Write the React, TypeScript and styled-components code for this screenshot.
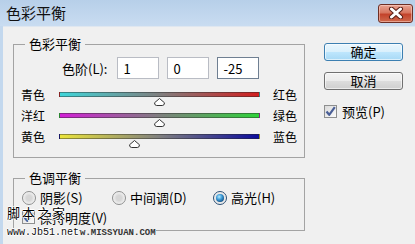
import React from 'react'
import styled, { createGlobalStyle } from 'styled-components'

const GlobalStyle = createGlobalStyle`
  html, body {
    margin: 0;
    padding: 0;
    background: #f0f0f0;
  }
  body {
    font-family: 'Noto Sans CJK SC', 'Liberation Sans', sans-serif;
    font-size: 13px;
    color: #000;
  }
`

type SliderData = {
  left: string
  right: string
  value: number
  from: string
  to: string
}

const sliders: SliderData[] = [
  { left: '青色', right: '红色', value: 1, from: '#3fd6da', to: '#d21e1e' },
  { left: '洋红', right: '绿色', value: 0, from: '#d21fd6', to: '#2fd23a' },
  { left: '黄色', right: '蓝色', value: -25, from: '#ebe43a', to: '#0c0c9c' },
]

const Window = styled.div`
  position: relative;
  width: 415px;
  height: 244px;
  overflow: hidden;
  display: flex;
  flex-direction: column;
  background: #c3d8ee;
`

const TitleBar = styled.div`
  height: 26px;
  flex: none;
  display: flex;
  align-items: center;
  justify-content: space-between;
  padding: 0 2px 0 6px;
  background: linear-gradient(#b7cfe9, #c9dcf1);
`

const Title = styled.span`
  font-size: 15px;
  line-height: 18px;
  color: #111;
`

const CloseButton = styled.div`
  width: 35px;
  height: 19px;
  box-sizing: border-box;
  border: 1px solid #6e2f25;
  border-radius: 3px;
  background: linear-gradient(#e9a493 0%, #d7765f 45%, #c3432b 55%, #cf6a4d 100%);
  box-shadow: inset 0 0 0 1px rgba(255, 220, 210, 0.5);
  display: flex;
  align-items: center;
  justify-content: center;
`

const Body = styled.div`
  flex: 1;
  margin-left: 3px;
  background: #f0f0f0;
  border-top: 1px solid #dfe7f0;
  display: flex;
  padding: 9px 0 0 10px;
`

const LeftColumn = styled.div`
  width: 292px;
  display: flex;
  flex-direction: column;
`

const RightColumn = styled.div`
  margin-left: 19px;
  padding-top: 7px;
  display: flex;
  flex-direction: column;
`

const Group = styled.fieldset<{ $gap?: number }>`
  margin: ${(p) => p.$gap ?? 0}px 0 0 0;
  padding: 0;
  border: 1px solid #a3a3a3;
  min-inline-size: 0;
`

const Legend = styled.legend`
  margin-left: 11px;
  padding: 0 4px;
  font-size: 13px;
  line-height: 16px;
`

const ColorContent = styled.div`
  padding: 5px 7px 18px 7px;
`

const LevelsRow = styled.div`
  display: flex;
  align-items: center;
  gap: 8px;
  height: 22px;
  padding-left: 41px;
`

const LevelsLabel = styled.span`
  font-size: 13px;
  margin-right: 2px;
`

const LevelInput = styled.input<{ $focused?: boolean }>`
  width: 42px;
  height: 22px;
  box-sizing: border-box;
  margin: 0;
  padding: 0 0 0 5px;
  border: 1px solid ${(p) => (p.$focused ? '#6f7f92' : '#b9bcc4')};
  background: #fff;
  font-family: 'Noto Sans CJK SC', 'Liberation Sans', sans-serif;
  font-size: 13px;
  color: #000;
  outline: none;
`

const Sliders = styled.div`
  margin-top: 13px;
  display: flex;
  flex-direction: column;
  gap: 16px;
`

const SliderRow = styled.div`
  display: flex;
  align-items: center;
  height: 5px;
`

const SideLabel = styled.span<{ $right?: boolean }>`
  width: ${(p) => (p.$right ? 'auto' : '38px')};
  margin-left: ${(p) => (p.$right ? '13px' : '0')};
  font-size: 12px;
  line-height: 16px;
  flex: none;
`

const Track = styled.div<{ $from: string; $to: string }>`
  position: relative;
  width: 201px;
  height: 5px;
  flex: none;
  box-sizing: border-box;
  border: 1px solid rgba(40, 40, 40, 0.45);
  background: linear-gradient(to right, ${(p) => p.$from}, #7f7f7f 50%, ${(p) => p.$to});
`

const Thumb = styled.svg`
  position: absolute;
  top: 5px;
  width: 11px;
  height: 8px;
  overflow: visible;
`

const ToneContent = styled.div`
  padding: 4px 0 5px 8px;
  display: flex;
  flex-direction: column;
  gap: 5px;
`

const RadioRow = styled.div`
  display: grid;
  grid-template-columns: 90px 101px auto;
  align-items: center;
  height: 15px;
`

const Option = styled.label`
  display: flex;
  align-items: center;
  gap: 4px;
  font-size: 13px;
  line-height: 15px;
  white-space: nowrap;
`

const Radio = styled.span<{ $checked?: boolean }>`
  position: relative;
  width: 14px;
  height: 14px;
  flex: none;
  box-sizing: border-box;
  border-radius: 50%;
  border: 1px solid ${(p) => (p.$checked ? '#2c4f74' : '#8e8f8f')};
  background: radial-gradient(circle at 50% 50%, #d6d6d6 30%, #f4f4f4 75%, #ffffff);
  &::after {
    content: '';
    display: ${(p) => (p.$checked ? 'block' : 'none')};
    position: absolute;
    left: 2px;
    top: 2px;
    width: 8px;
    height: 8px;
    border-radius: 50%;
    background: radial-gradient(circle at 40% 35%, #b5ecff 0%, #3c9ad6 40%, #0e4a80 80%);
  }
`

const CheckRow = styled.label`
  display: flex;
  align-items: center;
  gap: 4px;
  height: 15px;
  font-size: 13px;
  line-height: 15px;
`

const Box = styled.span`
  width: 13px;
  height: 13px;
  flex: none;
  box-sizing: border-box;
  border: 1px solid #8e8f8f;
  background: linear-gradient(135deg, #dadada, #fbfbfb);
  display: flex;
  align-items: center;
  justify-content: center;
`

const Button = styled.button<{ $primary?: boolean }>`
  width: 79px;
  height: 18px;
  box-sizing: border-box;
  padding: 0;
  margin: 0;
  border: 1px solid ${(p) => (p.$primary ? '#3c7fb1' : '#707070')};
  border-radius: 3px;
  background: ${(p) =>
    p.$primary
      ? 'linear-gradient(#eaf6fd 0%, #d9f0fc 50%, #bee6fd 51%, #a7d9f5 100%)'
      : 'linear-gradient(#f2f2f2 0%, #ebebeb 50%, #dddddd 51%, #cfcfcf 100%)'};
  box-shadow: inset 0 0 0 1px rgba(255, 255, 255, 0.6);
  font-family: 'Noto Sans CJK SC', sans-serif;
  font-size: 13px;
  line-height: 16px;
  color: #000;
  & + & {
    margin-top: 11px;
  }
`

const PreviewRow = styled(CheckRow)`
  margin-top: 14px;
  gap: 5px;
`

const WatermarkTitle = styled.div`
  position: absolute;
  left: 7px;
  top: 205px;
  font-size: 13px;
  line-height: 16px;
  letter-spacing: 2px;
  color: #000;
  text-shadow: 1px 0 0 #fff, -1px 0 0 #fff, 0 1px 0 #fff, 0 -1px 0 #fff;
`

const WatermarkUrl = styled.div`
  position: absolute;
  left: 7px;
  top: 228px;
  font-family: 'Liberation Mono', monospace;
  font-size: 10px;
  line-height: 10px;
  color: #111;
  background: #f0f0f0;
  text-shadow: 1px 0 0 #fff, -1px 0 0 #fff, 0 1px 0 #fff, 0 -1px 0 #fff;
`

const WatermarkSite = styled.div`
  position: absolute;
  left: 80px;
  top: 229px;
  font-family: 'Liberation Mono', monospace;
  font-weight: bold;
  font-size: 9px;
  line-height: 9px;
  color: #333;
  background: #f0f0f0;
`

const CheckMark = () => (
  <svg width="11" height="11" viewBox="0 0 11 11">
    <path d="M1.5 5.5 L4.2 8.8 L9.8 1.2" fill="none" stroke="#4a5f97" strokeWidth="2.2" strokeLinejoin="round" />
  </svg>
)

const CloseGlyph = () => (
  <svg width="16" height="12" viewBox="0 0 16 12">
    <path d="M3.5 2 L12.5 10 M12.5 2 L3.5 10" stroke="#5a1f16" strokeWidth="5" strokeLinecap="round" />
    <path d="M3.5 2 L12.5 10 M12.5 2 L3.5 10" stroke="#fff" strokeWidth="3" strokeLinecap="round" />
  </svg>
)

const Slider: React.FC<{ data: SliderData }> = ({ data }) => {
  const pct = (data.value + 100) / 200
  return (
    <SliderRow>
      <SideLabel>{data.left}</SideLabel>
      <Track $from={data.from} $to={data.to}>
        <Thumb viewBox="0 0 11 8" style={{ left: `calc(${pct * 100}% - 6px)` }}>
          <path
            d="M5.5 0.5 L10.5 4.8 Q10.5 7.5 8.3 7.5 L2.7 7.5 Q0.5 7.5 0.5 4.8 Z"
            fill="#fff"
            stroke="#333"
            strokeWidth="1"
          />
        </Thumb>
      </Track>
      <SideLabel $right>{data.right}</SideLabel>
    </SliderRow>
  )
}

export default function App() {
  return (
    <>
      <GlobalStyle />
      <Window>
        <TitleBar>
          <Title>色彩平衡</Title>
          <CloseButton>
            <CloseGlyph />
          </CloseButton>
        </TitleBar>
        <Body>
          <LeftColumn>
            <Group>
              <Legend>色彩平衡</Legend>
              <ColorContent>
                <LevelsRow>
                  <LevelsLabel>色阶(L):</LevelsLabel>
                  <LevelInput readOnly value="1" />
                  <LevelInput readOnly value="0" />
                  <LevelInput readOnly value="-25" $focused />
                </LevelsRow>
                <Sliders>
                  {sliders.map((s) => (
                    <Slider key={s.left} data={s} />
                  ))}
                </Sliders>
              </ColorContent>
            </Group>
            <Group $gap={12}>
              <Legend>色调平衡</Legend>
              <ToneContent>
                <RadioRow>
                  <Option>
                    <Radio />
                    阴影(S)
                  </Option>
                  <Option>
                    <Radio />
                    中间调(D)
                  </Option>
                  <Option>
                    <Radio $checked />
                    高光(H)
                  </Option>
                </RadioRow>
                <CheckRow>
                  <Box>
                    <CheckMark />
                  </Box>
                  保持明度(V)
                </CheckRow>
              </ToneContent>
            </Group>
          </LeftColumn>
          <RightColumn>
            <Button $primary>确定</Button>
            <Button>取消</Button>
            <PreviewRow>
              <Box>
                <CheckMark />
              </Box>
              预览(P)
            </PreviewRow>
          </RightColumn>
        </Body>
        <WatermarkTitle>脚本之家</WatermarkTitle>
        <WatermarkUrl>www.Jb51.net</WatermarkUrl>
        <WatermarkSite>w.MISSYUAN.COM</WatermarkSite>
      </Window>
    </>
  )
}
